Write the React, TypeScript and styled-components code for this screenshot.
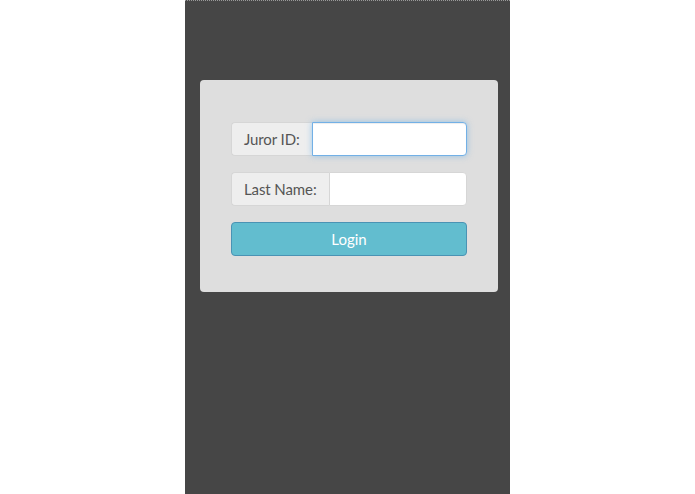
import React from 'react'
import styled, { createGlobalStyle } from 'styled-components'

const GlobalStyle = createGlobalStyle`
  html, body {
    margin: 0;
    padding: 0;
    background: #ffffff;
  }
  body {
    font-family: Lato, 'Liberation Sans', sans-serif;
  }
`

const Column = styled.div`
  width: 325px;
  height: 494px;
  margin: 0 auto;
  box-sizing: border-box;
  background: #464646;
  border-top: 1px dotted #9a9a9a;
  padding: 79px 12px 0 15px;
`

const Card = styled.form`
  background: #dedede;
  border-radius: 4px;
  padding: 42px 31px 36px;
  display: flex;
  flex-direction: column;
  gap: 16px;
`

const InputGroup = styled.div`
  display: flex;
  height: 34px;
`

const Addon = styled.span`
  display: flex;
  align-items: center;
  padding: 0 12px 0 12px;
  background: #eeeeee;
  border: 1px solid #d6d6d6;
  border-right: none;
  border-radius: 4px 0 0 4px;
  color: #555555;
  font-size: 15px;
  letter-spacing: -0.1px;
  white-space: nowrap;
`

const Field = styled.input<{ $focused?: boolean }>`
  flex: 1;
  min-width: 0;
  box-sizing: border-box;
  background: #ffffff;
  border: 1px solid ${p => (p.$focused ? '#72b0e6' : '#d6d6d6')};
  border-radius: 0 4px 4px 0;
  box-shadow: ${p =>
    p.$focused ? 'inset 0 1px 1px rgba(0,0,0,.075), 0 0 6px rgba(102,175,233,.6)' : 'none'};
  outline: none;
  font-family: inherit;
  font-size: 15px;
  padding: 0 10px;
`

const LoginButton = styled.button`
  height: 34px;
  background: #62bdcf;
  border: 1px solid #4a93b4;
  border-radius: 4px;
  color: #ffffff;
  font-family: inherit;
  font-size: 15px;
  cursor: pointer;
`

export default function App() {
  return (
    <>
      <GlobalStyle />
      <Column>
        <Card onSubmit={e => e.preventDefault()}>
          <InputGroup>
            <Addon>Juror ID:</Addon>
            <Field $focused />
          </InputGroup>
          <InputGroup>
            <Addon>Last Name:</Addon>
            <Field />
          </InputGroup>
          <LoginButton type="submit">Login</LoginButton>
        </Card>
      </Column>
    </>
  )
}
